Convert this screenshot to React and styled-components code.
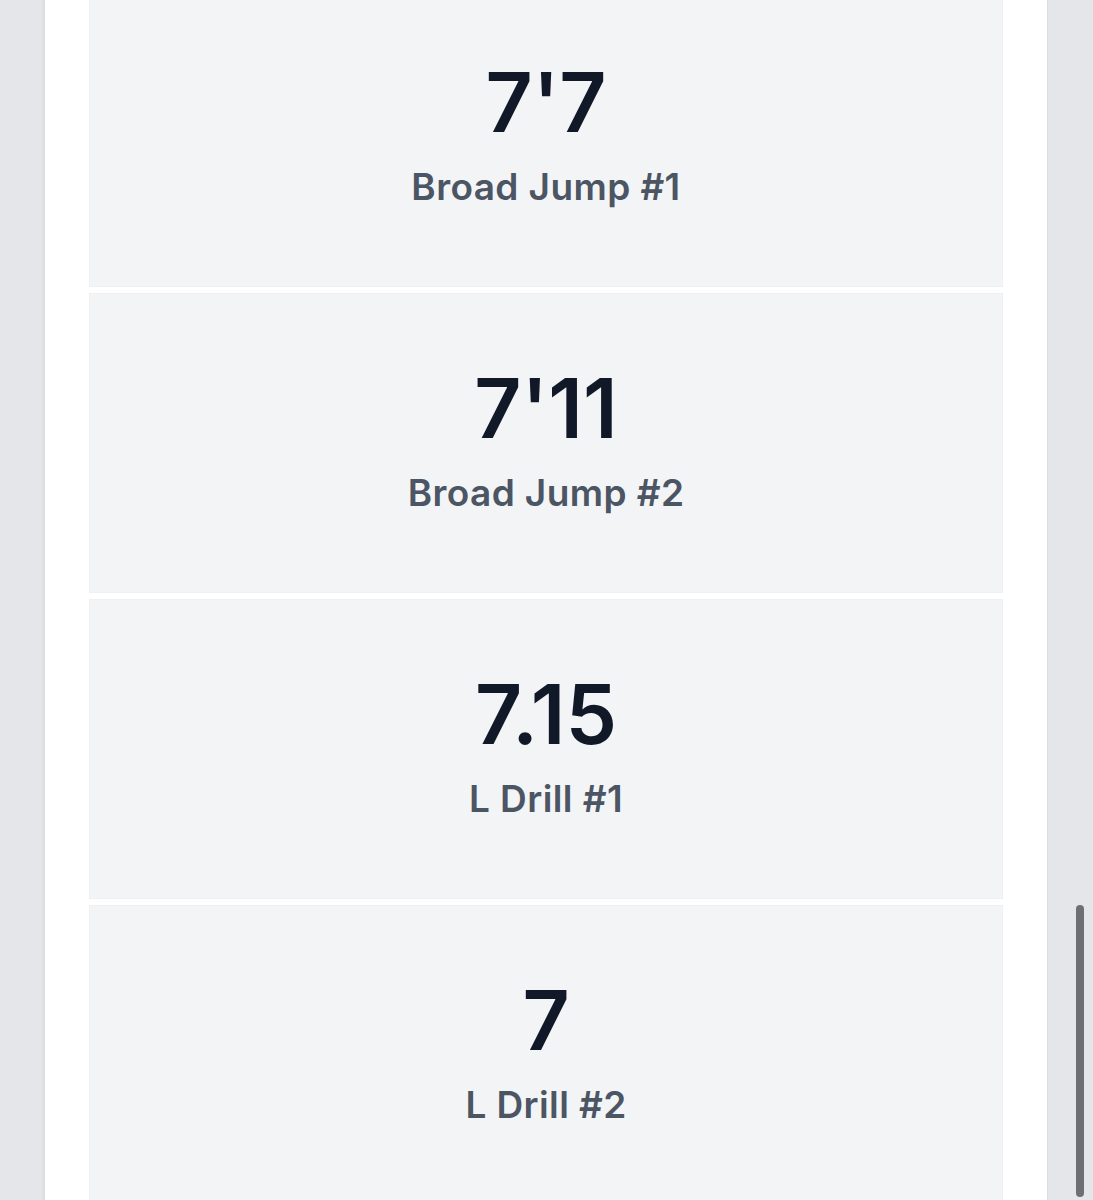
import React from 'react';
import styled, { createGlobalStyle } from 'styled-components';

const GlobalStyle = createGlobalStyle`
    html, body {
        margin: 0;
        padding: 0;
        height: 100%;
        overflow: hidden;
        background-color: #e5e6ea;
        font-family: Inter, "Noto Sans", "Liberation Sans", sans-serif;
    }
`;

const Page = styled.div`
    display: flex;
    height: 1200px;
    padding: 0 45px;
    overflow: hidden;
`;

const Panel = styled.main`
    flex: 1;
    background-color: #ffffff;
    padding: 0 44px;
    box-shadow: -2px 0 3px rgba(0, 0, 0, 0.05);
    border-right: 1px solid #dcdde1;
`;

const StatList = styled.div`
    display: flex;
    flex-direction: column;
    gap: 6px;
    /* list is scrolled down a little */
    margin-top: -13px;
`;

const StatCard = styled.div`
    height: 300px;
    box-sizing: border-box;
    padding-bottom: 6px;
    background-color: #f3f4f6;
    border: 1px solid #eff0f3;
    display: flex;
    flex-direction: column;
    align-items: center;
    justify-content: center;
    gap: 17px;
`;

const Value = styled.div`
    font-size: 82px;
    font-weight: 600;
    line-height: 1.1;
    color: #111827;
`;

const Label = styled.div`
    font-size: 37px;
    font-weight: 600;
    line-height: 1.2;
    letter-spacing: 0.4px;
    color: #4b5563;
`;

const ScrollThumb = styled.div`
    position: fixed;
    left: 1076px;
    top: 905px;
    width: 8px;
    height: 292px;
    border-radius: 4px;
    background-color: #6f6f72;
`;

const stats = [
    { value: "7'7", label: 'Broad Jump #1' },
    { value: "7'11", label: 'Broad Jump #2' },
    { value: '7.15', label: 'L Drill #1' },
    { value: '7', label: 'L Drill #2' },
];

const App = () => {
    return <>
        <GlobalStyle />
        <Page>
            <Panel>
                <StatList>
                    {stats.map((s) => (
                        <StatCard key={s.label}>
                            <Value>{s.value}</Value>
                            <Label>{s.label}</Label>
                        </StatCard>
                    ))}
                </StatList>
            </Panel>
        </Page>
        <ScrollThumb />
    </>
}

export default App;
